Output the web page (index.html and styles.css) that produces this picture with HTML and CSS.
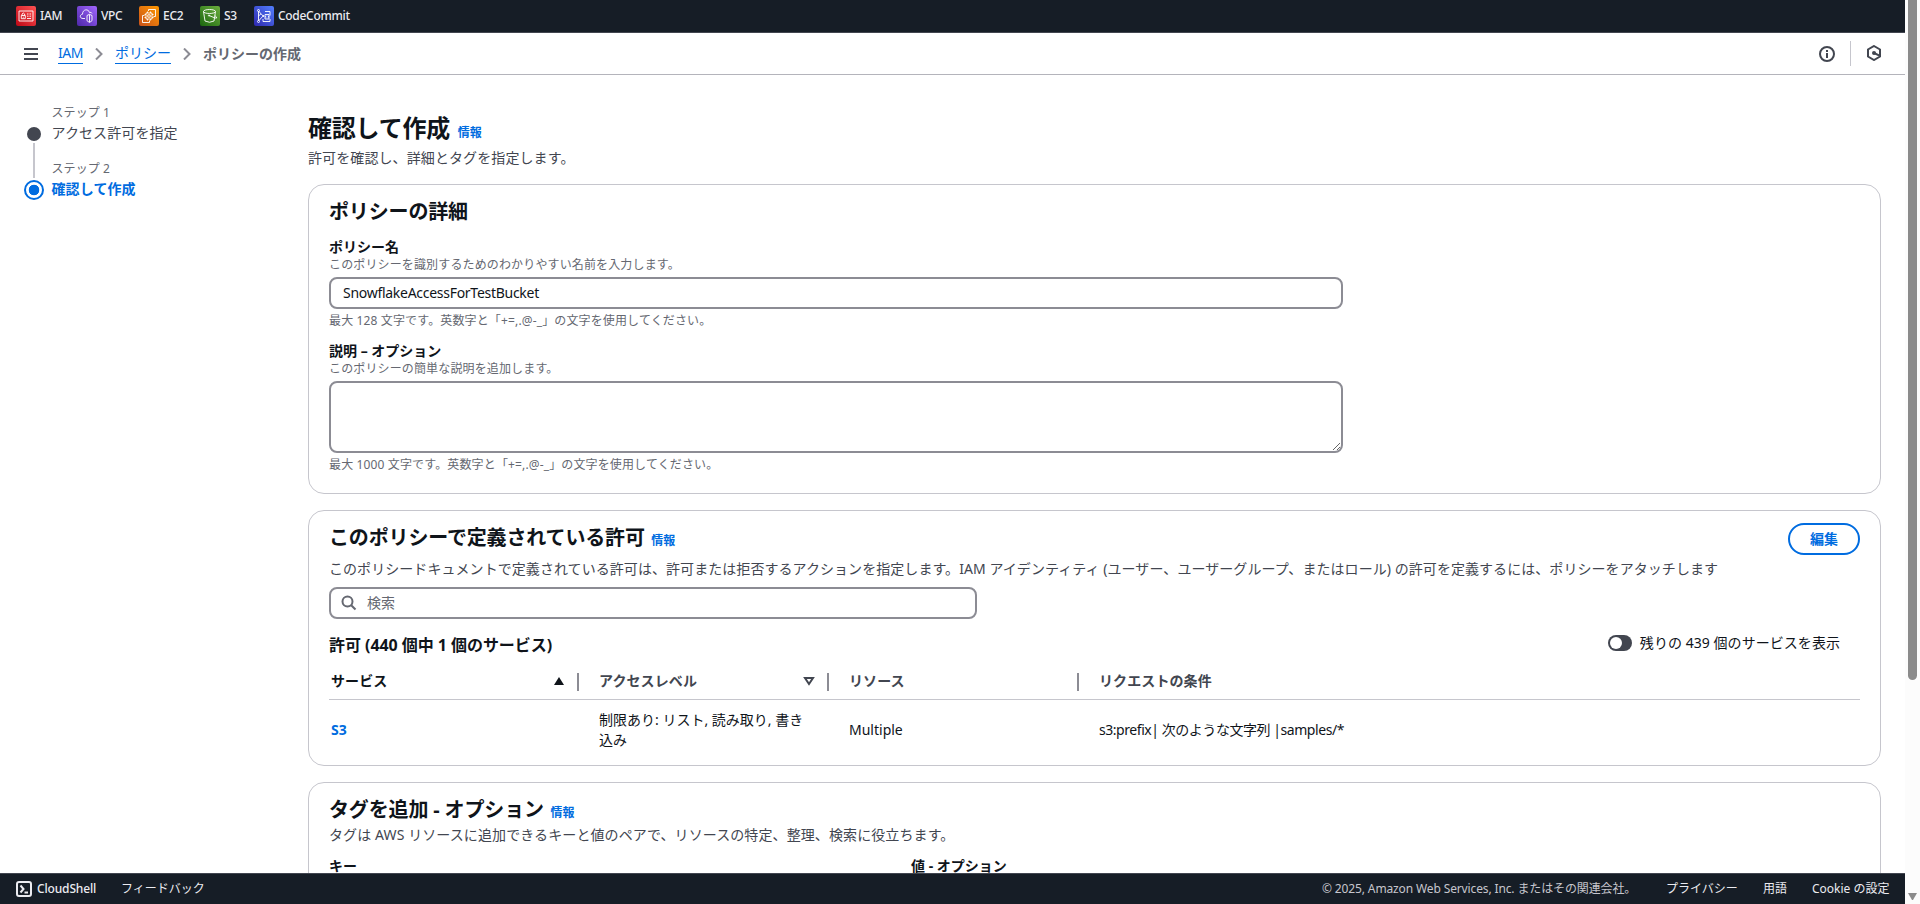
FILE: index.html
```html
<!DOCTYPE html>
<html lang="ja">
    <head>
        <meta charset="UTF-8">
        <title>ポリシーの作成 | IAM</title>
        <link rel="stylesheet" href="styles.css">
    </head>
    <body>
        <div class="app">
            <header class="favorites">
                <a class="favorite">
                    <svg class="service red" viewBox="0 0 20 20"><path d="M3 5h14v10H3zM5.3 9.5h4v3.2h-4zM6 9.5V8q1.3-2 2.6 0v1.5M7.3 10.7v1M11 8h1.5M13.5 8H15M11 10.2h1.5M13.5 10.2H15M11 12.5h4"/></svg>
                    <span>IAM</span>
                </a>
                <a class="favorite">
                    <svg class="service purple" viewBox="0 0 20 20"><path d="M8 12.5H6C2.500 12.500 2.500 8.500 5.500 8.200C5.500 3 11.500 2.500 12.500 6.500Q14.500 5.800 15 7.500M10 9.500L12.500 8.300L15 9.500V14.700L12.500 16.500L10 14.700ZM12.500 8.500V16"/></svg>
                    <span>VPC</span>
                </a>
                <a class="favorite">
                    <svg class="service orange" viewBox="0 0 20 20"><path d="M7 7h6v6H7zM8.800 8.800h2.400v2.400H8.800zM8.500 7V5.500M11.500 7V5.500M8.500 13v1.500M11.500 13v1.500M7 8.500H5.500M7 11.500H5.500M13 8.500h1.500M13 11.500h1.500M9.500 5V3.500h7v7H14.500M5.500 9.500H3.500v7h7V14.500"/></svg>
                    <span>EC2</span>
                </a>
                <a class="favorite">
                    <svg class="service green" viewBox="0 0 20 20"><ellipse cx="9.500" cy="5.500" rx="6" ry="2"/><path d="M3.500 5.500L5 15q4.500 2.500 9 0L15.500 5.500M9 9.500L15 12q2.500 .5 1.500-1L14.800 9.500"/><circle cx="9" cy="9.500" r=".6"/></svg>
                    <span>S3</span>
                </a>
                <a class="favorite">
                    <svg class="service blue" viewBox="0 0 20 20"><path d="M4.500 5v10M4.500 5L10 11M4.500 15L10 9M4.500 10L7 7.800M11 5.500h5v4M9 13v2.500h7V13M11 8.500h4v4.500h-4zM12.300 10l-1 .8 1 .8M13.800 10l1 .8-1 .8"/><circle cx="4.500" cy="4.500" r="1"/><circle cx="4.500" cy="15.500" r="1"/></svg>
                    <span>CodeCommit</span>
                </a>
            </header>

            <nav class="breadcrumbs">
                <svg class="menu" viewBox="0 0 14 12"><path d="M0 1h14M0 6h14M0 11h14"/></svg>
                <a class="crumb latin">IAM</a>
                <svg class="chevron" viewBox="0 0 8 12"><path d="M1 .5L6.500 6L1 11.500"/></svg>
                <a class="crumb">ポリシー</a>
                <svg class="chevron" viewBox="0 0 8 12"><path d="M1 .5L6.500 6L1 11.500"/></svg>
                <span class="current">ポリシーの作成</span>
                <div class="tools">
                    <svg class="tool" viewBox="0 0 16 16"><circle cx="8" cy="8" r="7"/><path d="M8 4v2M8 7v5"/></svg>
                    <svg class="tool" viewBox="0 0 16 16"><path d="M8 1L14 4.500V11.500L8 15L2 11.500V4.500Z"/><circle class="dot" cx="8" cy="8" r="2"/><path d="M8 8L14 10.800"/></svg>
                </div>
            </nav>

            <div class="layout">
                <ol class="steps">
                    <li class="step">
                        <small>ステップ 1</small>
                        <span class="step-title">アクセス許可を指定</span>
                    </li>
                    <li class="step active">
                        <small>ステップ 2</small>
                        <span class="step-title">確認して作成</span>
                    </li>
                </ol>

                <main class="content">
                    <div class="page-header">
                        <h1>確認して作成 <a class="info">情報</a></h1>
                        <p class="description">許可を確認し、詳細とタグを指定します。</p>
                    </div>

                    <section class="card">
                        <h2>ポリシーの詳細</h2>
                        <div class="field">
                            <label for="name">ポリシー名</label>
                            <p class="hint">このポリシーを識別するためのわかりやすい名前を入力します。</p>
                            <input id="name" class="input" type="text" value="SnowflakeAccessForTestBucket">
                            <p class="hint">最大 128 文字です。英数字と「+=,.@-_」の文字を使用してください。</p>
                        </div>
                        <div class="field">
                            <label for="description">説明 – オプション</label>
                            <p class="hint">このポリシーの簡単な説明を追加します。</p>
                            <textarea id="description" class="input"></textarea>
                            <p class="hint">最大 1000 文字です。英数字と「+=,.@-_」の文字を使用してください。</p>
                        </div>
                    </section>

                    <section class="card permissions">
                        <div class="card-header">
                            <h2>このポリシーで定義されている許可 <a class="info">情報</a></h2>
                            <button class="button">編集</button>
                        </div>
                        <p class="description wide">このポリシードキュメントで定義されている許可は、許可または拒否するアクションを指定します。IAM アイデンティティ (ユーザー、ユーザーグループ、またはロール) の許可を定義するには、ポリシーをアタッチします</p>
                        <div class="search">
                            <svg viewBox="0 0 16 16"><circle cx="6.500" cy="6.500" r="5"/><path d="M10.200 10.200L14.500 14.500"/></svg>
                            <span>検索</span>
                        </div>
                        <div class="table-header">
                            <h3>許可 (440 個中 1 個のサービス)</h3>
                            <label class="toggle"><i></i><span>残りの 439 個のサービスを表示</span></label>
                        </div>
                        <table>
                            <thead>
                                <tr>
                                    <th class="sorted"><div>サービス<svg viewBox="0 0 12 10"><path class="fill" d="M6 1L11 9H1Z"/></svg></div></th>
                                    <th><div>アクセスレベル<svg viewBox="0 0 12 10"><path d="M2 2H10L6 8Z"/></svg></div></th>
                                    <th><div>リソース</div></th>
                                    <th><div>リクエストの条件</div></th>
                                </tr>
                            </thead>
                            <tbody>
                                <tr>
                                    <td><a class="link">S3</a></td>
                                    <td>制限あり: リスト, 読み取り, 書き込み</td>
                                    <td>Multiple</td>
                                    <td class="condition">s3:prefix| 次のような文字列 |samples/*</td>
                                </tr>
                            </tbody>
                        </table>
                    </section>

                    <section class="card tags">
                        <h2>タグを追加 - オプション <a class="info">情報</a></h2>
                        <p class="description">タグは AWS リソースに追加できるキーと値のペアで、リソースの特定、整理、検索に役立ちます。</p>
                        <div class="tag-labels">
                            <label>キー</label>
                            <label>値 - オプション</label>
                        </div>
                    </section>
                </main>
            </div>

            <footer class="footer">
                <svg class="shell" viewBox="0 0 16 16"><rect x="1" y="1" width="14" height="14" rx="2"/><path d="M4.500 4.500L7.500 8L4.500 11.500M8.500 11.500h3.500"/></svg>
                <a class="cloudshell">CloudShell</a>
                <a class="feedback">フィードバック</a>
                <span class="copyright">© 2025, Amazon Web Services, Inc. またはその関連会社。</span>
                <a class="privacy">プライバシー</a>
                <a class="terms">用語</a>
                <a class="cookies">Cookie の設定</a>
            </footer>
        </div>
        <div class="scrollbar">
            <div class="thumb"></div>
            <div class="arrow"></div>
        </div>
    </body>
</html>
```
FILE: styles.css
```css
*, *::before, *::after {
    box-sizing: border-box;
}
body {
    margin: 0;
    height: 904px;
    display: flex;
    overflow: hidden;
    color: #0f141a;
    background: #fff;
    font: 14px/20px "Noto Sans", "Noto Sans CJK JP", sans-serif;
    text-spacing-trim: space-all;
}
h1, h2, h3, p, ol {
    margin: 0;
    padding: 0;
}
svg {
    display: block;
    flex: none;
    fill: none;
    stroke: currentColor;
}
.app {
    width: 1905px;
    height: 904px;
    display: flex;
    flex-direction: column;
}

/* top bar */
.favorites {
    flex: none;
    height: 33px;
    padding-left: 16px;
    display: flex;
    align-items: center;
    background: #161d26;
    border-bottom: 1px solid #424650;
    color: #ebebf0;
    font-size: 12px;
    font-weight: 500;
    letter-spacing: -.3px;
}
.favorite {
    width: 61px;
    display: flex;
    align-items: center;
    gap: 4px;
}
.favorite:nth-child(2) {
    width: 62px;
}
.favorite:nth-child(4) {
    width: 54px;
}
.service {
    width: 20px;
    height: 20px;
    border-radius: 2px;
    stroke: #fff;
    stroke-width: .9;
}
.red { background: linear-gradient(45deg, #bd0816, #ff5252); }
.purple { background: linear-gradient(45deg, #4d27a8, #a166ff); }
.orange { background: linear-gradient(45deg, #c8511b, #ff9900); }
.green { background: linear-gradient(45deg, #1b660f, #6cae3e); }
.blue { background: linear-gradient(45deg, #2e27ad, #527fff); }

/* breadcrumbs */
.breadcrumbs {
    flex: none;
    height: 42px;
    padding: 0 23px 0 24px;
    display: flex;
    align-items: center;
    border-bottom: 1px solid #b4b4bb;
    color: #424650;
}
.menu {
    width: 14px;
    height: 12px;
    margin-right: 20px;
    stroke-width: 2;
}
.crumb {
    height: 20px;
    line-height: 18px;
    color: #006ce0;
    border-bottom: 1px solid #006ce0;
}
.latin {
    letter-spacing: -.5px;
}
.chevron {
    width: 8px;
    height: 12px;
    margin: 0 12px;
    color: #8c8c94;
    stroke-width: 2;
}
.current {
    color: #656871;
    font-weight: 700;
}
.tools {
    margin-left: auto;
    display: flex;
    align-items: center;
}
.tool {
    width: 16px;
    height: 16px;
    stroke-width: 2;
}
.tool + .tool {
    width: 32px;
    height: 25px;
    padding: 4px 0 5px 15px;
    margin-left: 15px;
    border-left: 1px solid #c6c6cd;
}
.dot {
    fill: currentColor;
    stroke: none;
}

/* wizard */
.layout {
    flex: 1;
    min-height: 0;
    display: flex;
    overflow: hidden;
}
.steps {
    width: 308px;
    flex: none;
    padding: 30px 0 0 24px;
    list-style: none;
}
.step {
    position: relative;
    height: 56px;
    padding-left: 27.5px;
    color: #424650;
    letter-spacing: .1px;
}
.step small {
    display: block;
    height: 18px;
    font-size: 12px;
    line-height: 16px;
    color: #656871;
}
.step-title {
    display: block;
}
.step::before {
    content: "";
    position: absolute;
    left: 3px;
    top: 22px;
    width: 14px;
    height: 14px;
    border-radius: 50%;
    background: #424650;
}
.step:first-child::after {
    content: "";
    position: absolute;
    left: 9px;
    top: 38px;
    width: 2px;
    height: 35px;
    background: #c6c6cd;
}
.step.active {
    color: #006ce0;
    font-weight: 700;
}
.step.active small {
    font-weight: 400;
}
.step.active::before {
    left: 0;
    top: 19px;
    width: 20px;
    height: 20px;
    border: 2px solid #006ce0;
    background: radial-gradient(#006ce0 5px, #fff 5.6px);
}
.content {
    width: 1573px;
    padding-top: 38px;
    display: flex;
    flex-direction: column;
    gap: 16px;
}
.page-header {
    flex: none;
}
h1 {
    font-size: 24px;
    line-height: 30px;
    margin-bottom: 5px;
    letter-spacing: -.2px;
}
h2 {
    font-size: 20px;
    line-height: 24px;
    letter-spacing: -.15px;
}
h3 {
    font-size: 16px;
    line-height: 20px;
    letter-spacing: -.05px;
}
.info {
    margin-left: 1.5px;
    font-size: 12px;
    line-height: 1;
    letter-spacing: 0;
    font-weight: 700;
    color: #006ce0;
}
.description {
    color: #424650;
    letter-spacing: .1px;
}
.wide {
    letter-spacing: .06px;
}
.card {
    flex: none;
    padding: 15px 20px 20px;
    border: 1px solid #c6c6cd;
    border-radius: 16px;
}
.card > h2 {
    margin-bottom: 13px;
}
.field + .field {
    margin-top: 12px;
}
label {
    display: block;
    font-weight: 700;
}
.hint {
    font-size: 12px;
    line-height: 16px;
    letter-spacing: .14px;
    color: #656871;
}
.input {
    display: block;
    width: 1014px;
    height: 32px;
    margin: 4px 0;
    padding: 3px 12px 5px;
    border: 2px solid #8c8c94;
    border-radius: 8px;
    background: #fff;
    color: #0f141a;
    font: inherit;
    letter-spacing: -.28px;
    outline: none;
}
textarea.input {
    height: 72px;
}

/* permissions table */
.permissions {
    height: 256px;
    padding-top: 12px;
    padding-bottom: 0;
}
.card-header {
    display: flex;
    justify-content: space-between;
    height: 36px;
}
.card-header h2 {
    padding-top: 3px;
}
.button {
    width: 72px;
    height: 32px;
    padding: 0;
    border: 2px solid #006ce0;
    border-radius: 16px;
    background: #fff;
    color: #006ce0;
    font: inherit;
    font-weight: 700;
}
.search {
    width: 648px;
    height: 32px;
    margin-top: 8px;
    padding: 0 10px;
    display: flex;
    align-items: center;
    gap: 10px;
    border: 2px solid #8c8c94;
    border-radius: 8px;
    color: #656871;
}
.search svg {
    width: 16px;
    height: 16px;
    stroke-width: 2;
}
.table-header {
    display: flex;
    justify-content: space-between;
    height: 45px;
    padding: 14px 20px 0 0;
}
.table-header h3 {
    padding-top: 2px;
}
.toggle {
    display: flex;
    gap: 8px;
    height: 20px;
    font-weight: 400;
    letter-spacing: .05px;
}
.toggle i {
    width: 24px;
    height: 16px;
    margin-top: 2px;
    padding: 2px;
    border-radius: 8px;
    background: #424650;
}
.toggle i::before {
    content: "";
    display: block;
    width: 12px;
    height: 12px;
    border-radius: 50%;
    background: #fff;
}
table {
    width: 1531px;
    table-layout: fixed;
    border-collapse: separate;
    border-spacing: 0;
}
th, td {
    width: 250px;
    padding: 0 20px;
    text-align: left;
}
th:first-child, td:first-child {
    padding-left: 2px;
}
th:last-child, td:last-child {
    width: auto;
}
th {
    height: 36px;
    padding-right: 0;
    border-bottom: 1px solid #c6c6cd;
    color: #424650;
    letter-spacing: .1px;
}
th div {
    height: 18px;
    line-height: 16px;
    padding: 0 12px 2px 0;
    display: flex;
    align-items: center;
    justify-content: space-between;
    border-right: 2px solid #8c8c94;
}
th:last-child div {
    border: 0;
}
th svg {
    width: 12px;
    height: 10px;
    stroke-width: 2;
}
.sorted {
    color: #0f141a;
}
.fill {
    fill: currentColor;
    stroke: none;
}
td {
    height: 60px;
}
.link {
    color: #006ce0;
    font-weight: 700;
}
.condition {
    letter-spacing: -.45px;
}

.tags > h2 {
    margin-bottom: 3px;
}
.tag-labels {
    display: grid;
    grid-template-columns: 582px 1fr;
    margin-top: 12px;
    line-height: 18px;
}

/* footer */
.footer {
    flex: none;
    height: 31px;
    padding: 0 16px;
    display: flex;
    align-items: center;
    background: #161d26;
    border-top: 1px solid #424650;
    color: #ebebf0;
    font-size: 12px;
    white-space: nowrap;
}
.shell {
    width: 16px;
    height: 16px;
    margin-right: 5px;
    stroke-width: 2;
}
.cloudshell {
    width: 84px;
    font-weight: 500;
    letter-spacing: -.15px;
}
.copyright {
    width: 344px;
    margin-left: auto;
    color: #c6c6cd;
    letter-spacing: -.13px;
}
.privacy {
    width: 97px;
}
.terms {
    width: 49px;
}
.cookies {
    width: 77px;
}

.scrollbar {
    width: 15px;
    height: 904px;
    padding: 0 3px 4px;
    display: flex;
    flex-direction: column;
    justify-content: space-between;
    background: #fcfcfc;
}
.thumb {
    height: 680px;
    border-radius: 0 0 5px 5px;
    background: #8b8b8b;
}
.arrow {
    border: 4.5px solid transparent;
    border-top: 7px solid #8b8b8b;
    border-bottom: 0;
}
```
